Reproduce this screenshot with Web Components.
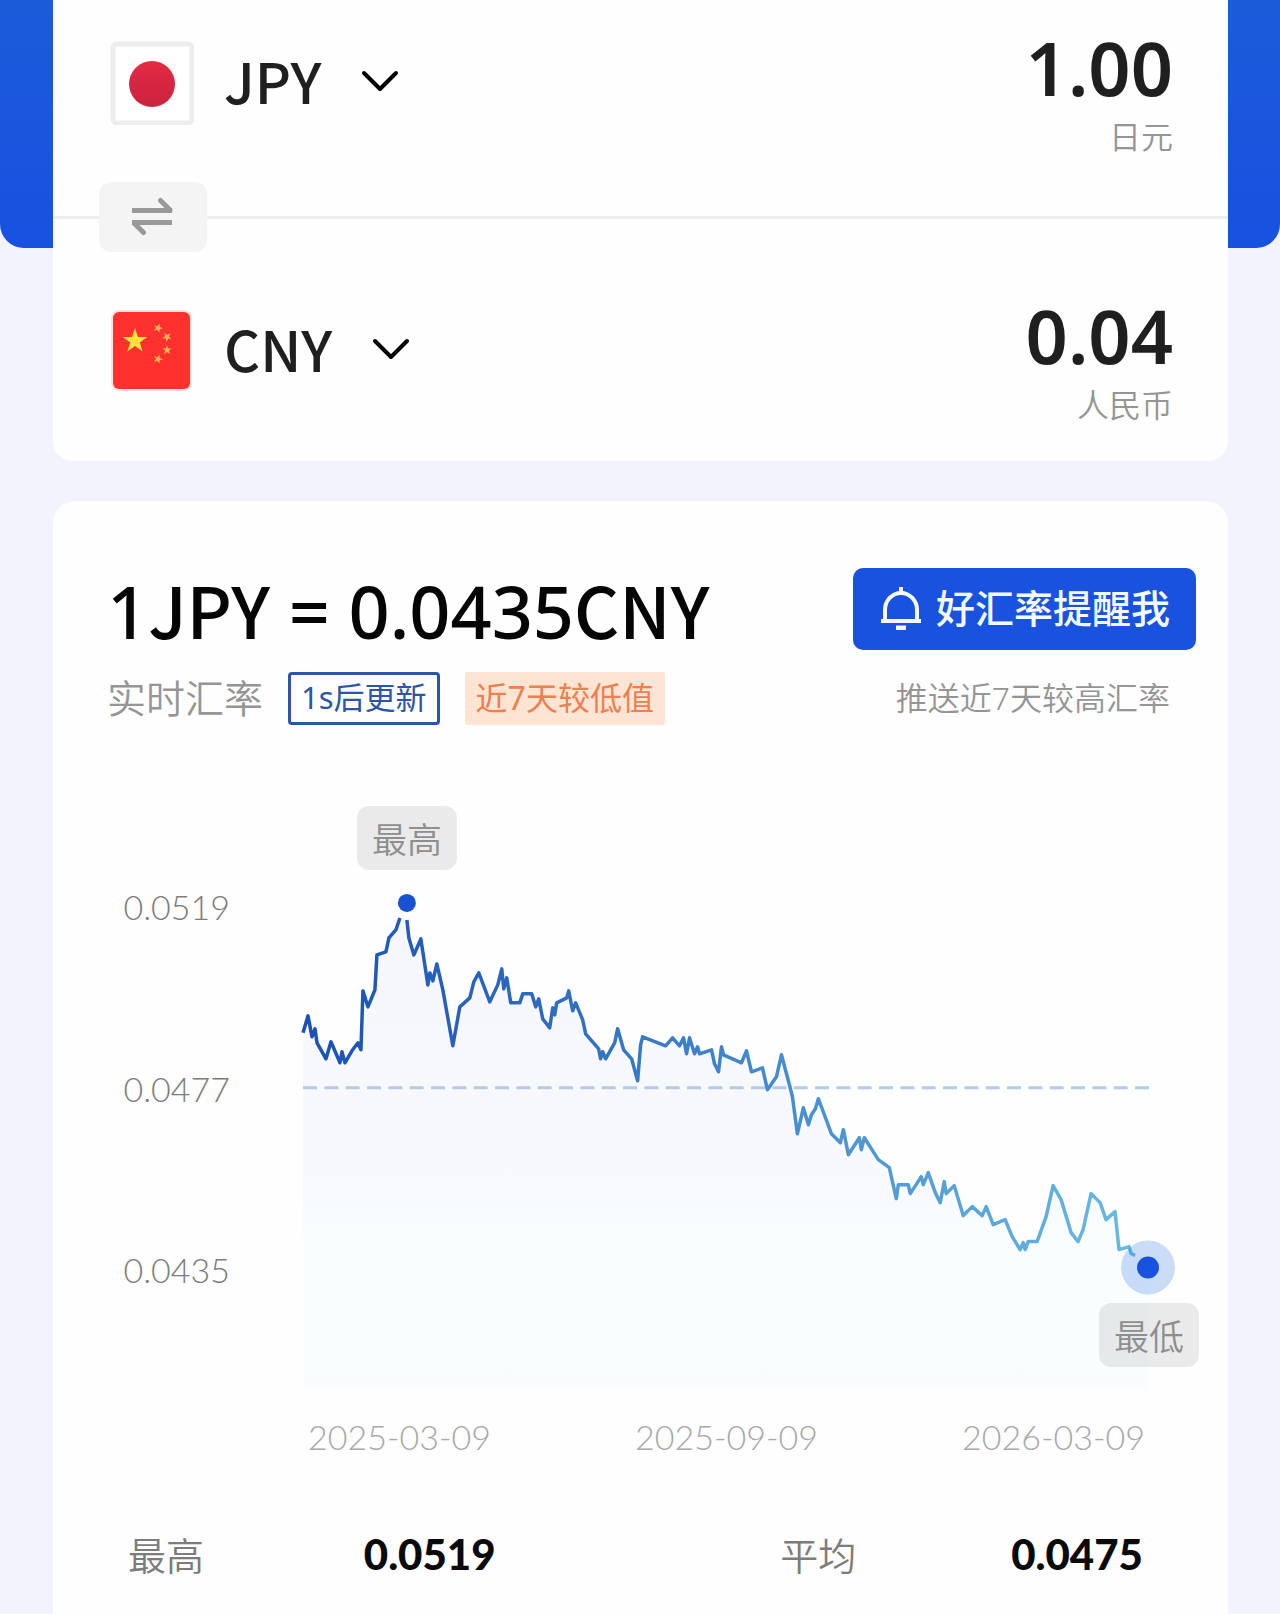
<!DOCTYPE html>
<html lang="zh-CN">
<head>
<meta charset="utf-8">
<meta name="viewport" content="width=device-width, initial-scale=1">
<title>汇率换算</title>
<style>
  html { background: #f2f3fc; }
  body {
    margin: 0;
    font-family: "Noto Sans", "Noto Sans CJK SC", sans-serif;
    color: #1f1f1f;
    --blue: #1852de;
    --muted: #959595;
    --side: 0 52px 0 53px;
  }
</style>
</head>
<body>
<rate-page>
  <currency-card slot="converter">
    <currency-row code="JPY" amount="1.00" unit="日元"><flag-jp slot="flag"></flag-jp></currency-row>
    <swap-divider></swap-divider>
    <currency-row code="CNY" amount="0.04" unit="人民币"><flag-cn slot="flag"></flag-cn></currency-row>
  </currency-card>
  <rate-card>
    <rate-summary slot="summary"></rate-summary>
    <rate-chart slot="chart"></rate-chart>
    <rate-stats slot="stats"></rate-stats>
  </rate-card>
</rate-page>

<script>
  const define = (name, html, setup) => {
    const template = document.createElement('template');
    template.innerHTML = html;
    customElements.define(name, class extends HTMLElement {
      constructor() {
        super();
        this.attachShadow({ mode: 'open' }).append(template.content.cloneNode(true));
      }
      connectedCallback() { if (setup) setup(this, this.shadowRoot); }
    });
  };

  define('rate-page', `
    <style>
      :host { display: flex; flex-direction: column; gap: 40px; }
      .top { display: grid; }
      .band, ::slotted([slot=converter]) { grid-area: 1 / 1; }
      .band { height: 248px; border-radius: 0 0 24px 24px; background: linear-gradient(#1c5cda, #1751e0); }
      ::slotted(*) { margin: var(--side); }
    </style>
    <div class="top"><div class="band"></div><slot name="converter"></slot></div>
    <slot></slot>`);

  define('currency-card', `
    <style>
      :host { display: block; background: #fefefe; border-radius: 0 0 20px 20px; padding: 15px 0 37px; }
    </style>
    <slot></slot>`);

  define('currency-row', `
    <style>
      :host { display: flex; justify-content: space-between; padding: 0 55px 0 57px; }
      .pick { display: flex; align-items: center; height: 136px; }
      label { display: flex; align-items: center; margin-bottom: 4px; }
      ::slotted([slot=flag]) { width: 84px; margin-right: 30px; }
      select {
        appearance: none; border: 0; background: none; margin: 0; padding: 0 0 2px;
        font: 500 56px/84px "Noto Sans CJK SC", sans-serif; color: inherit;
      }
      svg { display: block; width: 38px; height: 22px; margin-left: 39px; pointer-events: none; }
      .amount { display: flex; flex-direction: column; align-items: flex-end; padding-top: 2px; }
      output { font-size: 74px; line-height: 101px; font-weight: 600; }
      .unit { font: 350 32px/38px Lato, "Noto Sans CJK SC", sans-serif; color: var(--muted); }
    </style>
    <div class="pick">
      <slot name="flag"></slot>
      <label><select aria-label="币种"><option></option></select>
        <svg viewBox="0 0 38 22" fill="none" stroke="#000" stroke-width="4" stroke-linecap="round" stroke-linejoin="round"><path d="M3 3l16 16L35 3"/></svg>
      </label>
    </div>
    <div class="amount"><output></output><span class="unit"></span></div>`,
    (el, root) => {
      root.querySelector('option').textContent = el.getAttribute('code');
      root.querySelector('output').textContent = el.getAttribute('amount');
      root.querySelector('.unit').textContent = el.getAttribute('unit');
    });

  define('flag-jp', `
    <style>:host { display: block; } svg { display: block; width: 100%; }</style>
    <svg viewBox="0 0 84 84" role="img" aria-label="日本">
      <defs><linearGradient id="sun" x1="0" y1="0" x2="0" y2="1"><stop offset="0" stop-color="#e52a42"/><stop offset="1" stop-color="#ca2340"/></linearGradient></defs>
      <rect x="3" y="3" width="79" height="79" rx="4" fill="#fff" stroke="#ededed" stroke-width="5"/>
      <circle cx="42" cy="43" r="23" fill="url(#sun)"/>
    </svg>`);

  define('flag-cn', `
    <style>:host { display: block; } svg { display: block; width: 100%; }</style>
    <svg viewBox="0 0 84 84" role="img" aria-label="中国">
      <defs><path id="star" d="M0-10L2.300-3.100H9.500L3.700 1.200L5.900 8.100L0 3.900L-5.900 8.100L-3.700 1.200L-9.500-3.100H-2.300Z"/></defs>
      <rect x="1" y="1" width="81" height="81" rx="8" fill="#fbe3e5"/>
      <rect x="3" y="3" width="77" height="77" rx="6" fill="#fe312e"/>
      <g fill="#ffe23c">
        <use href="#star" transform="translate(25 32) scale(1.300)"/>
        <g fill="#fcb850">
          <use href="#star" transform="translate(48 19) rotate(20) scale(.5)"/>
          <use href="#star" transform="translate(57 28) rotate(40) scale(.5)"/>
          <use href="#star" transform="translate(57 41) scale(.5)"/>
          <use href="#star" transform="translate(48 50) rotate(20) scale(.5)"/>
        </g>
      </g>
    </svg>`);

  define('swap-divider', `
    <style>
      :host { display: flex; align-items: center; height: 70px; margin: 26px 0 31px; }
      i { height: 3px; background: #eee; flex: 1; }
      i:first-of-type { flex: 0 0 46px; }
      button { width: 108px; height: 70px; border: 0; border-radius: 12px; background: #f4f4f4; padding: 0; display: grid; place-items: center; }
      svg { display: block; width: 42px; height: 40px; }
    </style>
    <i></i>
    <button type="button" aria-label="交换币种"><svg viewBox="0 0 42 40" fill="none" stroke="#999" stroke-width="5" stroke-linejoin="round"><path d="M0 13.500H40"/><path d="M28.500 3.500L38 13" stroke-linecap="round"/><path d="M40 25.500H0"/><path d="M11.500 35.500L2 26" stroke-linecap="round"/></svg></button>
    <i></i>`);

  define('rate-card', `
    <style>:host { display: block; background: #fefefe; border-radius: 22px 22px 0 0; }</style>
    <slot name="summary"></slot><slot name="chart"></slot><slot name="stats"></slot>`);

  define('rate-summary', `
    <style>
      :host { display: flex; justify-content: space-between; padding: 67px 32px 0 54px; }
      .rate { display: flex; flex-direction: column; }
      h1 { margin: 0; font: 500 70px/82px "Noto Sans CJK SC", sans-serif; color: #050505; white-space: nowrap; }
      h1 span { font: 500 72px/1 "Noto Sans", sans-serif; }
      .tags { display: flex; align-items: center; gap: 25px; margin-top: 21px; font-size: 32px; }
      .live { font-size: 39px; line-height: 54px; font-weight: 350; color: var(--muted); }
      .tag { box-sizing: border-box; height: 53px; line-height: 47px; white-space: nowrap; }
      .wait { border: 3px solid #2a55a8; border-radius: 4px; padding: 0 10px; color: #2a55a8; font-size: 31px; line-height: 45px; }
      .low { background: #fde4d3; color: #ec8050; padding: 2px 11px; border-radius: 2px; }
      .alert { display: flex; flex-direction: column; align-items: flex-end; }
      button {
        display: flex; align-items: center; gap: 15px; height: 82px; padding: 0 26px 2px 28px;
        border: 0; border-radius: 10px; background: var(--blue); color: #f4faff;
        font: 500 39px/56px "Noto Sans", "Noto Sans CJK SC", sans-serif; white-space: nowrap;
      }
      svg { display: block; width: 40px; height: 44px; }
      .note { font-size: 32px; line-height: 48px; font-weight: 350; color: var(--muted); margin: 24px 26px 0 0; white-space: nowrap; }
    </style>
    <div class="rate">
      <h1><span>1</span>JPY<span> = 0.0435</span>CNY</h1>
      <div class="tags"><span class="live">实时汇率</span><span class="tag wait">1s后更新</span><span class="tag low">近7天较低值</span></div>
    </div>
    <div class="alert">
      <button type="button"><svg viewBox="0 0 40 44" fill="none" stroke="#f4faff" stroke-width="4"><path d="M20 1V6"/><path d="M4 34V24a16 17 0 0 1 32 0V34"/><path d="M0 35H40"/><path d="M15 42H25" stroke-width="5"/></svg>好汇率提醒我</button>
      <span class="note">推送近7天较高汇率</span>
    </div>`);

  define('rate-chart', `
    <style>
      :host { display: grid; grid-template-columns: 123px 1fr; column-gap: 73px; padding: 160px 79px 0 54px; font-family: Lato, "Noto Sans", sans-serif; font-weight: 300; }
      .y { display: flex; flex-direction: column; justify-content: space-between; align-items: flex-end; margin-bottom: 99px; font-size: 34px; line-height: 44px; color: #7c7c7c; }
      .plot { position: relative; }
      .plot svg { display: block; width: 100%; overflow: visible; }
      .chip {
        position: absolute; transform: translateX(-50%); box-sizing: border-box; height: 64px; padding: 0 15px; border-radius: 12px;
        background: rgba(0, 0, 0, .08); color: #8e8e8e; font: 350 35px/64px "Noto Sans CJK SC", sans-serif; white-space: nowrap;
      }
      .high { left: 12.300%; bottom: 103%; }
      .low { left: 100%; top: 82.600%; }
      .x { grid-column: 2; display: flex; justify-content: space-between; padding: 24px 4px 0 5px; font-size: 34px; line-height: 44px; color: #a8a8a8; white-space: nowrap; }
    </style>
    <div class="y"><span>0.0519</span><span>0.0477</span><span>0.0435</span></div>
    <div class="plot">
      <svg viewBox="303 885 847 507" role="img" aria-label="日元兑人民币汇率走势">
        <defs>
          <linearGradient id="stroke" gradientUnits="userSpaceOnUse" x1="303" y1="0" x2="1150" y2="0">
            <stop offset="0" stop-color="#1b50b4"/><stop offset=".3" stop-color="#2f6dc0"/><stop offset=".6" stop-color="#4a90d0"/><stop offset="1" stop-color="#6cbce2"/>
          </linearGradient>
          <linearGradient id="area" x1="0" y1="0" x2="0" y2="1">
            <stop offset="0" stop-color="#f6f7fc"/><stop offset=".55" stop-color="#f7f9fd"/><stop offset=".68" stop-color="#f8fdfe"/><stop offset="1" stop-color="#fafdff"/>
          </linearGradient>
        </defs>
        <path id="fill" fill="url(#area)"/>
        <path d="M303 1088H1150" stroke="#b2cce8" stroke-width="3" stroke-dasharray="14 7.360"/>
        <g fill="none" stroke="url(#stroke)" stroke-width="3.500" stroke-linejoin="round"><path id="rise"/><path id="fall"/></g>
        <circle cx="407" cy="903" r="9" fill="#1852d0"/>
        <circle cx="1149" cy="1268" r="27" fill="#1866de" fill-opacity=".22"/>
        <circle cx="1149" cy="1268" r="11" fill="#1852de"/>
      </svg>
      <span class="chip high">最高</span>
      <span class="chip low">最低</span>
    </div>
    <div class="x"><span>2025-03-09</span><span>2025-09-09</span><span>2026-03-09</span></div>`,
    (el, root) => {
      const rise = '303 1033 308 1016 312 1037 315 1029 317 1043 326 1059 331 1042 340 1063 342 1052 345 1063 352 1051 358 1043 361 1050 363 991 368 1007 375 990 377 955 386 952 389 938 396 930 400 918';
      const fall = '407 920 409 938 414 955 421 939 428 985 430 973 433 981 437 964 443 990 453 1046 460 1007 470 998 474 982 479 973 490 1002 498 985 502 969 504 989 507 978 511 1003 520 1003 523 994 532 994 536 1007 539 999 543 1019 550 1028 553 1008 555 1015 557 1003 567 998 569 991 573 1011 576 1003 583 1020 586 1034 599 1049 601 1059 603 1052 606 1059 615 1043 618 1029 624 1050 632 1059 638 1081 641 1045 643 1037 '
        + '666 1046 673 1038 680 1046 684 1038 687 1054 690 1038 695 1054 698 1047 700 1054 712 1050 715 1064 719 1072 722 1047 724 1055 742 1063 747 1051 752 1072 763 1068 768 1090 777 1077 782 1055 790 1085 793 1097 798 1134 804 1108 809 1125 812 1115 816 1109 819 1099 832 1134 841 1143 844 1130 849 1155 860 1138 862 1150 865 1138 879 1160 890 1168 897 1199 899 1185 909 1185 911 1194 922 1177 924 1185 929 1173 936 1193 941 1203 945 1182 947 1194 955 1186 '
        + '964 1216 973 1207 983 1216 987 1207 994 1225 1006 1220 1013 1237 1021 1250 1024 1243 1026 1250 1029 1242 1038 1242 1047 1217 1054 1186 1062 1200 1072 1233 1079 1242 1084 1230 1092 1194 1101 1203 1107 1220 1116 1212 1120 1250 1130 1247 1132 1254 1136 1256';
      root.getElementById('rise').setAttribute('d', 'M' + rise);
      root.getElementById('fall').setAttribute('d', 'M' + fall);
      root.getElementById('fill').setAttribute('d', 'M303 1391L' + rise + ' ' + fall + ' 1150 1268V1391Z');
    });

  define('rate-stats', `
    <style>
      :host { display: block; padding: 71px 79px 37px 75px; }
      dl { margin: 0; display: grid; grid-template-columns: 236fr 417fr 231fr 138fr; align-items: center; line-height: 48px; white-space: nowrap; }
      dt { font: 350 38px/48px "Noto Sans CJK SC", sans-serif; color: #7c7c7c; }
      dd { margin: 0; font: 900 42px/48px Lato, sans-serif; color: #0a0a0a; }
    </style>
    <dl><dt>最高</dt><dd>0.0519</dd><dt>平均</dt><dd>0.0475</dd></dl>`);
</script>
</body>
</html>
